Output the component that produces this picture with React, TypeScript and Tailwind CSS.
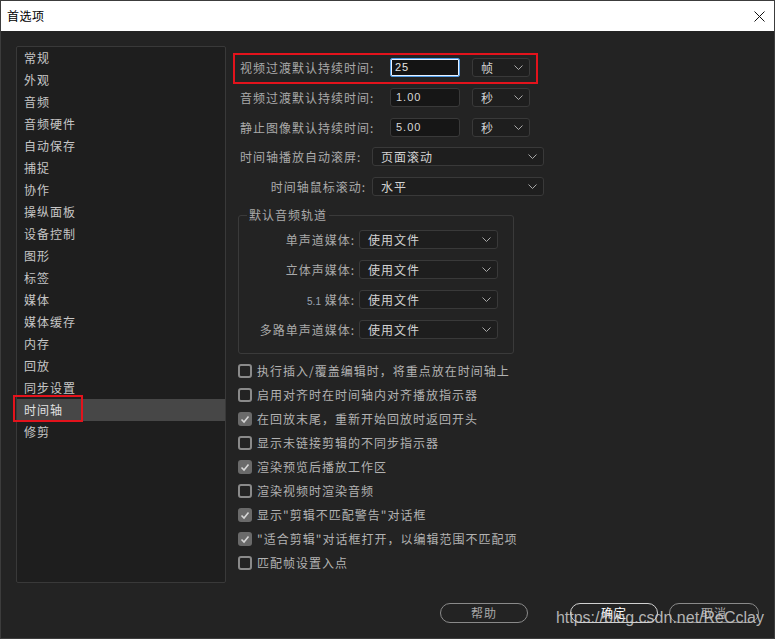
import React from 'react';

const navItems = [
  '常规', '外观', '音频', '音频硬件', '自动保存', '捕捉', '协作', '操纵面板', '设备控制',
  '图形', '标签', '媒体', '媒体缓存', '内存', '回放', '同步设置', '时间轴', '修剪',
];

const checks: { label: string; checked: boolean }[] = [
  { label: '执行插入/覆盖编辑时，将重点放在时间轴上', checked: false },
  { label: '启用对齐时在时间轴内对齐播放指示器', checked: false },
  { label: '在回放末尾，重新开始回放时返回开头', checked: true },
  { label: '显示未链接剪辑的不同步指示器', checked: false },
  { label: '渲染预览后播放工作区', checked: true },
  { label: '渲染视频时渲染音频', checked: false },
  { label: '显示"剪辑不匹配警告"对话框', checked: true },
  { label: '"适合剪辑"对话框打开，以编辑范围不匹配项', checked: true },
  { label: '匹配帧设置入点', checked: false },
];

const Chevron = () => (
  <svg width="9" height="5" viewBox="0 0 9 5" className="shrink-0">
    <polyline points="0.5,0.5 4.5,4.5 8.5,0.5" fill="none" stroke="#a8a8a8" strokeWidth="1" />
  </svg>
);

const Select = ({ value, className }: { value: string; className: string }) => (
  <div className={`flex h-[19px] items-center justify-between rounded-[3px] border border-[#393939] bg-[#1e1e1e] pl-[8px] pr-[6px] text-[#d2d2d2] ${className}`}>
    <span>{value}</span>
    <Chevron />
  </div>
);

const NumInput = ({ value, focused }: { value: string; focused?: boolean }) => (
  <div
    className={
      focused
        ? 'flex h-[19px] w-[70px] items-center rounded-[2px] border border-[#4f9be6] bg-[#141414] pl-[4px] shadow-[inset_0_0_0_1px_#e8f2ff] text-[11px] text-[#e6e6e6] [font-family:"Liberation_Sans",sans-serif]'
        : 'flex h-[19px] w-[70px] items-center rounded-[3px] border border-[#393939] bg-[#161616] pl-[5px] text-[11px] text-[#d8d8d8] [font-family:"Liberation_Sans",sans-serif]'
    }
  >
    {value}
  </div>
);

const CheckBox = ({ checked }: { checked: boolean }) =>
  checked ? (
    <div className="flex h-[14px] w-[14px] items-center justify-center rounded-[3px] bg-[#6a6a6a]">
      <svg width="10" height="9" viewBox="0 0 10 9">
        <polyline points="1.5,4.5 4,7 8.5,1.5" fill="none" stroke="#d6d6d6" strokeWidth="1.6" />
      </svg>
    </div>
  ) : (
    <div className="h-[14px] w-[14px] rounded-[3px] border-2 border-[#8a8a8a]" />
  );

export default function App() {
  return (
    <div className="relative flex h-[639px] w-[775px] flex-col overflow-hidden border border-[#3c3c3c] bg-[#232323] text-[12px] tracking-[1px] [font-family:'Noto_Sans_CJK_SC',sans-serif]">
      {/* Title bar */}
      <div className="flex h-[30px] shrink-0 items-center justify-between bg-white pl-[6px] pr-[9px] text-black">
        <span className="tracking-[0.5px]">首选项</span>
        <svg width="11" height="11" viewBox="0 0 11 11">
          <path d="M0.5 0.5L10.5 10.5M10.5 0.5L0.5 10.5" stroke="#111" strokeWidth="1" />
        </svg>
      </div>

      <div className="flex flex-1 flex-col">
        <div className="flex">
          {/* Left list */}
          <div className="ml-[15px] mt-[15px] h-[537px] w-[210px] rounded-[2px] border border-[#393939] bg-[#1e1e1e] text-[#c6c6c6]">
            {navItems.map((item) => (
              <div
                key={item}
                className={`relative flex h-[22px] items-center pl-[7px] ${item === '时间轴' ? 'bg-[#474747] text-[#e0e0e0]' : ''}`}
              >
                {item}
                {item === '时间轴' && (
                  <div className="absolute left-[-4px] top-[-4px] h-[27px] w-[70px] border-2 border-[#e3131c]" />
                )}
              </div>
            ))}
          </div>

          {/* Right settings */}
          <div className="ml-[12px] flex flex-col text-[#aaaaaa]">
            <div className="relative mt-[27px] flex h-[19px] w-[292px] items-center">
              <span className="w-[152px] pl-[2px]">视频过渡默认持续时间:</span>
              <NumInput value="25" focused />
              <Select value="帧" className="ml-[12px] w-[58px]" />
              <div className="absolute -bottom-[7px] -left-[5px] -right-[8px] -top-[5px] border-2 border-[#e3131c]" />
            </div>
            <div className="mt-[11px] flex h-[19px] items-center">
              <span className="w-[152px] pl-[2px]">音频过渡默认持续时间:</span>
              <NumInput value="1.00" />
              <Select value="秒" className="ml-[12px] w-[58px]" />
            </div>
            <div className="mt-[11px] flex h-[19px] items-center">
              <span className="w-[152px] pl-[2px]">静止图像默认持续时间:</span>
              <NumInput value="5.00" />
              <Select value="秒" className="ml-[12px] w-[58px]" />
            </div>
            <div className="mt-[10px] flex h-[19px] items-center">
              <span className="w-[134px] pl-[2px]">时间轴播放自动滚屏:</span>
              <Select value="页面滚动" className="w-[172px]" />
            </div>
            <div className="mt-[11px] flex h-[19px] items-center">
              <span className="w-[134px] pr-[6px] text-right">时间轴鼠标滚动:</span>
              <Select value="水平" className="w-[172px]" />
            </div>

            {/* Group box */}
            <fieldset className="mt-[11px] w-[276px] rounded-[3px] border border-[#3a3a3a] pb-[14px]">
              <legend className="ml-[8px] px-[2px] leading-[16px] text-[#aaaaaa]">默认音频轨道</legend>
              <div className="mt-[7px] flex flex-col gap-[11px]">
                {[
                  ['单声道媒体:', false],
                  ['立体声媒体:', false],
                  ['5.1 媒体:', true],
                  ['多路单声道媒体:', false],
                ].map(([label, latin]) => (
                  <div key={label as string} className="flex h-[19px] items-center">
                    <span className="w-[120px] pr-[4px] text-right">
                      {latin ? (
                        <>
                          <span className="text-[10px] tracking-normal text-[#9aa4b4] [font-family:'Liberation_Sans',sans-serif]">5.1</span> 媒体:
                        </>
                      ) : (
                        (label as string)
                      )}
                    </span>
                    <Select value="使用文件" className="w-[139px]" />
                  </div>
                ))}
              </div>
            </fieldset>

            {/* Checkboxes */}
            <div className="mt-[5px] flex flex-col">
              {checks.map((c) => (
                <div key={c.label} className="flex h-[24px] items-center">
                  <CheckBox checked={c.checked} />
                  <span className="ml-[5px] text-[#b2b2b2]">{c.label}</span>
                </div>
              ))}
            </div>
          </div>
        </div>

        {/* Buttons */}
        <div className="mt-[20px] flex justify-end pr-[15px]">
          <button className="flex h-[20px] w-[88px] items-center justify-center rounded-full border border-[#8a8a8a] text-[#a8a8a8]">帮助</button>
          <button className="ml-[42px] flex h-[20px] w-[88px] items-center justify-center rounded-full border border-[#d0d0d0] text-white">确定</button>
          <button className="ml-[11px] flex h-[20px] w-[90px] items-center justify-center rounded-full border border-[#8a8a8a] text-[#a8a8a8]">取消</button>
        </div>
      </div>

      {/* Watermark */}
      <div className="pointer-events-none absolute bottom-[8px] right-[10px] text-[16px] tracking-normal text-[#d0d0d0]/85 [font-family:'Liberation_Sans',sans-serif]">
        https://blog.csdn.net/ReCclay
      </div>
    </div>
  );
}
